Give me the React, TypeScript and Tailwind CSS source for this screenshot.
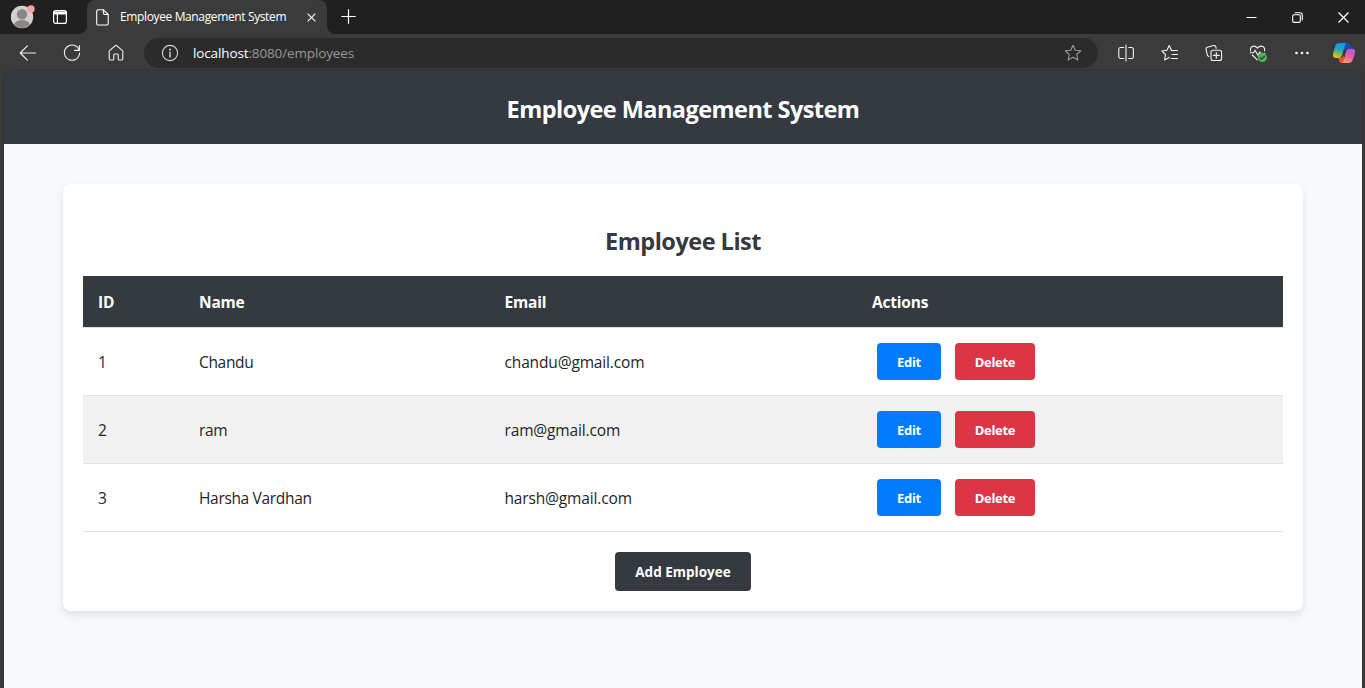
import type { ReactNode } from "react";

const employees = [
  { id: 1, name: "Chandu", email: "chandu@gmail.com" },
  { id: 2, name: "ram", email: "ram@gmail.com" },
  { id: 3, name: "Harsha Vardhan", email: "harsh@gmail.com" },
];

function Icon({ children, className = "" }: { children: ReactNode; className?: string }) {
  return (
    <svg
      viewBox="0 0 20 20"
      className={`size-5 shrink-0 ${className}`}
      fill="none"
      stroke="currentColor"
      strokeWidth="1.1"
      strokeLinecap="round"
      strokeLinejoin="round"
    >
      {children}
    </svg>
  );
}

const STAR = "M10 2.2l2.3 5 5.4.6-4 3.7 1.1 5.4L10 14.2l-4.8 2.7 1.1-5.4-4-3.7 5.4-.6z";

function TabStrip() {
  return (
    <div className="flex h-[34px] bg-[#202020] text-white">
      <div className="flex w-[87px] shrink-0 items-center pl-[11px]">
        <svg viewBox="0 0 24 24" className="size-6 shrink-0">
          <circle cx="11" cy="12" r="11.2" fill="#d2d0ce" />
          <circle cx="11" cy="9.2" r="5.2" fill="#8a8886" />
          <path d="M3 19.6a8.4 6.6 0 0 1 16 0a11.2 11.2 0 0 1-16 0z" fill="#8a8886" />
          <circle cx="20" cy="4" r="3.7" fill="#f8a19c" />
        </svg>
        <svg viewBox="0 0 16 16" className="ml-[17px] size-4 shrink-0" fill="none" stroke="white" strokeWidth="1.2">
          <rect x="1.6" y="1.6" width="12.8" height="12.8" rx="2" />
          <path d="M1.5 4h13" strokeWidth="3" />
          <path d="M5.4 5v9" />
        </svg>
      </div>
      <div className="relative flex w-60 shrink-0 items-center rounded-t-lg bg-[#3b3b3b] pl-[9px]">
        <svg viewBox="0 0 8 8" className="absolute bottom-0 -left-2 size-2 fill-[#3b3b3b]">
          <path d="M8 0v8H0a8 8 0 0 0 8-8z" />
        </svg>
        <svg viewBox="0 0 8 8" className="absolute -right-2 bottom-0 size-2 fill-[#3b3b3b]">
          <path d="M0 0v8h8a8 8 0 0 1-8-8z" />
        </svg>
        <svg viewBox="0 0 13 17" className="h-[17px] w-[13px] shrink-0" fill="none" stroke="white" strokeWidth="1.1" strokeLinejoin="round">
          <path d="M2.2.8h5.3l4.7 4.7v8.9a1.6 1.6 0 0 1-1.6 1.6H2.2A1.5 1.5 0 0 1 .7 14.4V2.3A1.5 1.5 0 0 1 2.2.8z" />
          <path d="M7.5.8v3.5a1.2 1.2 0 0 0 1.2 1.2h3.5" />
        </svg>
        <span className="ml-[11px] w-[180px] text-[12px] leading-4 tracking-[-0.37px] whitespace-nowrap">
          Employee Management System
        </span>
        <svg viewBox="0 0 10 10" className="ml-[7px] size-[9px] shrink-0" stroke="white" strokeWidth="1.2">
          <path d="M.7.7l8.6 8.6M9.3.7L.7 9.3" />
        </svg>
      </div>
      <svg viewBox="0 0 14 14" className="mt-[9px] ml-[14px] size-[15px]" stroke="white" strokeWidth="1.1">
        <path d="M7 .3v13.400M.3 7h13.400" />
      </svg>
      <div className="mr-4 ml-auto flex items-center gap-[35px]">
        <svg viewBox="0 0 11 11" className="size-[11px]" stroke="white">
          <path d="M.5 5.500h10" />
        </svg>
        <svg viewBox="0 0 11 11" className="size-[11px]" fill="none" stroke="white" strokeWidth="1.1">
          <rect x=".7" y="2.800" width="7.600" height="7.600" rx="1.300" />
          <path d="M2.700.7h5.200a2.400 2.400 0 0 1 2.400 2.400v5.200" />
        </svg>
        <svg viewBox="0 0 11 11" className="size-[11px]" stroke="white" strokeWidth="1.200">
          <path d="M.5.5l10 10M10.500.5l-10 10" />
        </svg>
      </div>
    </div>
  );
}

function Toolbar() {
  return (
    <div className="flex h-[37px] items-center bg-[#3b3b3b] pt-px pl-[18px] text-[#f2f2f2]">
      <Icon>
        <path d="M17.6 10H2.4M9.4 2.8L2.2 10l7.2 7.2" />
      </Icon>
      <Icon className="ml-6">
        <path d="M17.2 7.2A7.6 7.6 0 1 0 17.6 10M17.4 2.6v4.8h-4.8" />
      </Icon>
      <Icon className="ml-6">
        <path d="M3.200 8.600a1.600 1.600 0 0 1 .6-1.200l5.300-4.600a1.400 1.400 0 0 1 1.800 0l5.300 4.600a1.600 1.600 0 0 1 .6 1.200v7.200a1.200 1.200 0 0 1-1.200 1.200h-2.400a1 1 0 0 1-1-1v-4a1 1 0 0 0-1-1H8.800a1 1 0 0 0-1 1v4a1 1 0 0 1-1 1H4.400a1.200 1.200 0 0 1-1.200-1.200z" />
      </Icon>
      <div className="ml-[18px] flex h-[30px] w-[954px] items-center rounded-full bg-[#2b2b2b] pr-[15px] pl-4">
        <Icon className="text-[#d6d6d6]">
          <circle cx="10" cy="10" r="7.6" />
          <path d="M10 9v5" strokeWidth="1.4" />
          <circle cx="10" cy="6.5" r=".45" fill="currentColor" />
        </Icon>
        <span className="ml-[13px] text-[13.500px] leading-5 tracking-[-0.130px] text-[#969696]">
          <span className="text-white">localhost</span>:8080/employees
        </span>
        <Icon className="ml-auto text-[#9a9a9a]">
          <path d={STAR} />
        </Icon>
      </div>
      <Icon className="ml-[17.500px]">
        <path d="M7.800 4.500H4.600A1.800 1.800 0 0 0 2.800 6.300v7.400A1.800 1.800 0 0 0 4.600 15.500h3.200M12.800 4.500h2.800a1.800 1.800 0 0 1 1.800 1.800v7.400a1.800 1.800 0 0 1-1.800 1.800h-2.800M10 2v16" />
      </Icon>
      <Icon className="ml-[24.500px]">
        <path d="M11.500 7.300L9.200 2.500 6.900 7.300l-5 .7 3.600 3.600-.9 5.400 4.600-2.600M11.200 7.500h6.300M12 11.500h5.500M11.300 15.500h6.200" />
      </Icon>
      <Icon className="ml-6">
        <rect x="7" y="7.300" width="10.600" height="10.200" rx="2" />
        <path d="M12.300 9.500v5.800M9.400 12.400h5.800M4.800 13.500L3.500 12.600 2 6.400a1.800 1.800 0 0 1 1.300-2.200l6.300-1.700a1.800 1.800 0 0 1 2.200 1.300l.4 1.500" />
      </Icon>
      <Icon className="ml-6">
        <path d="M2.200 9.800h3.300l1.600-2.600 2.800 5 1.900-3.200 1.200 1.500h3.800M2.600 7.900c-.8-2.500.9-4.800 3.300-4.800 1.600 0 2.600.8 3.600 2 1-1.200 2.100-2 3.700-2 2.400 0 4.100 2.300 3.300 4.800M4.300 12l4.900 4.800" />
        <circle cx="14.300" cy="14.500" r="4.600" fill="#4caf50" stroke="none" />
        <path d="M12.200 14.600l1.500 1.400 2.800-2.900" stroke="#23402a" />
      </Icon>
      <Icon className="ml-6">
        <g fill="currentColor" stroke="none">
          <circle cx="4.500" cy="10" r="1.350" />
          <circle cx="10" cy="10" r="1.350" />
          <circle cx="15.500" cy="10" r="1.350" />
        </g>
      </Icon>
      <svg viewBox="0 0 24 24" className="ml-[20px] size-6 shrink-0">
        <defs>
          <linearGradient id="copilotLeft" x1="0.600" y1="0" x2="0.300" y2="1">
            <stop offset="0" stopColor="#1595ee" />
            <stop offset="0.450" stopColor="#23a8ca" />
            <stop offset="0.720" stopColor="#7dbb4b" />
            <stop offset="1" stopColor="#f2c60d" />
          </linearGradient>
          <linearGradient id="copilotRight" x1="0.700" y1="0" x2="0.300" y2="1">
            <stop offset="0" stopColor="#a65bf0" />
            <stop offset="0.500" stopColor="#ea5aa3" />
            <stop offset="1" stopColor="#ff9a5a" />
          </linearGradient>
        </defs>
        <path d="M12 2h4.200c1.500 0 2.100 1 2.500 2.300l.9 3.400h-4.100c-2 0-3 .9-3.600 2.900z" fill="#1749b8" />
        <path d="M12 22H9.800c-1.700 0-2.200-1.200-2.600-2.500l-.8-2.500H8c2 0 3.200-.9 3.800-2.900z" fill="#ee5136" />
        <path d="M7.800 2h7.400c-1.300.2-2 1.500-2.500 3.100l-2.400 8.300C9.600 15.700 8.600 17 6.400 17H4.200C1.500 17 .4 15 1.200 12.200l2-6.800C3.900 3.200 5.300 2 7.800 2z" fill="url(#copilotLeft)" />
        <path d="M16.200 22H9.300c1.300-.2 2-1.500 2.500-3.100l2.200-8.100c.6-2.200 1.600-3.100 3.800-3.100h2.200c2.700 0 3.800 1.600 3 4.400l-2.100 6.500c-.7 2.200-2.200 3.400-4.700 3.400z" fill="url(#copilotRight)" />
      </svg>
    </div>
  );
}

export default function App() {
  return (
    <div className="flex h-[688px] w-[1365px] flex-col overflow-hidden bg-[#3b3b3b] font-['Open_Sans','Noto_Sans',sans-serif]">
      <TabStrip />
      <Toolbar />
      <div className="mr-[3px] ml-1 flex flex-1 flex-col rounded-t-lg shadow-[0_0_3px_rgba(0,0,0,0.35)]">
        <header className="flex h-[73px] items-center justify-center rounded-t-lg bg-[#343a40] pt-[3px] text-white">
          <h1 className="text-[23.500px] leading-8 font-bold tracking-[-0.550px]">Employee Management System</h1>
        </header>
        <main className="flex-1 bg-[#f8f9fb] pt-10">
          <section className="mx-auto flex h-[427px] w-[1240px] flex-col rounded-lg bg-white px-5 shadow-[0_4px_8px_rgba(0,0,0,0.1)]">
            <h2 className="mt-[41px] text-center text-[23.500px] leading-8 font-bold tracking-[-0.500px] text-[#343a40]">
              Employee List
            </h2>
            <table className="mt-[19px] w-full table-fixed border-separate border-spacing-0 text-left text-[#212529]">
              <colgroup>
                <col className="w-[101px]" />
                <col className="w-[305.500px]" />
                <col className="w-[367.500px]" />
                <col />
              </colgroup>
              <thead>
                <tr className="h-[52px] bg-[#343a40] text-[15.500px] leading-6 tracking-[-0.200px] text-white">
                  {["ID", "Name", "Email", "Actions"].map((label) => (
                    <th key={label} className="border-b border-[#dee2e6] px-[15px] pt-px pb-0 font-bold">
                      {label}
                    </th>
                  ))}
                </tr>
              </thead>
              <tbody>
                {employees.map((e) => (
                  <tr key={e.id} className="h-[68px] text-[15.500px] leading-6 tracking-[-0.150px] even:bg-[#f1f1f1]">
                    <td className="border-b border-[#dee2e6] px-[15px] pt-px pb-0">{e.id}</td>
                    <td className="border-b border-[#dee2e6] px-[15px] pt-px pb-0 tracking-[-0.330px]">{e.name}</td>
                    <td className="border-b border-[#dee2e6] px-[15px] pt-px pb-0">{e.email}</td>
                    <td className="border-b border-[#dee2e6] px-5 py-0">
                      <div className="flex gap-[14px]">
                        <button className="h-[37px] w-16 rounded bg-[#007bff] text-[13px] leading-4 font-bold tracking-[-0.300px] text-white">
                          Edit
                        </button>
                        <button className="h-[37px] w-20 rounded bg-[#dc3545] text-[13px] leading-4 font-bold tracking-[-0.300px] text-white">
                          Delete
                        </button>
                      </div>
                    </td>
                  </tr>
                ))}
              </tbody>
            </table>
            <button className="mx-auto mt-5 h-[39px] w-[136px] rounded bg-[#343a40] text-[13.500px] leading-4 font-bold whitespace-nowrap text-white">
              Add Employee
            </button>
          </section>
        </main>
      </div>
    </div>
  );
}
